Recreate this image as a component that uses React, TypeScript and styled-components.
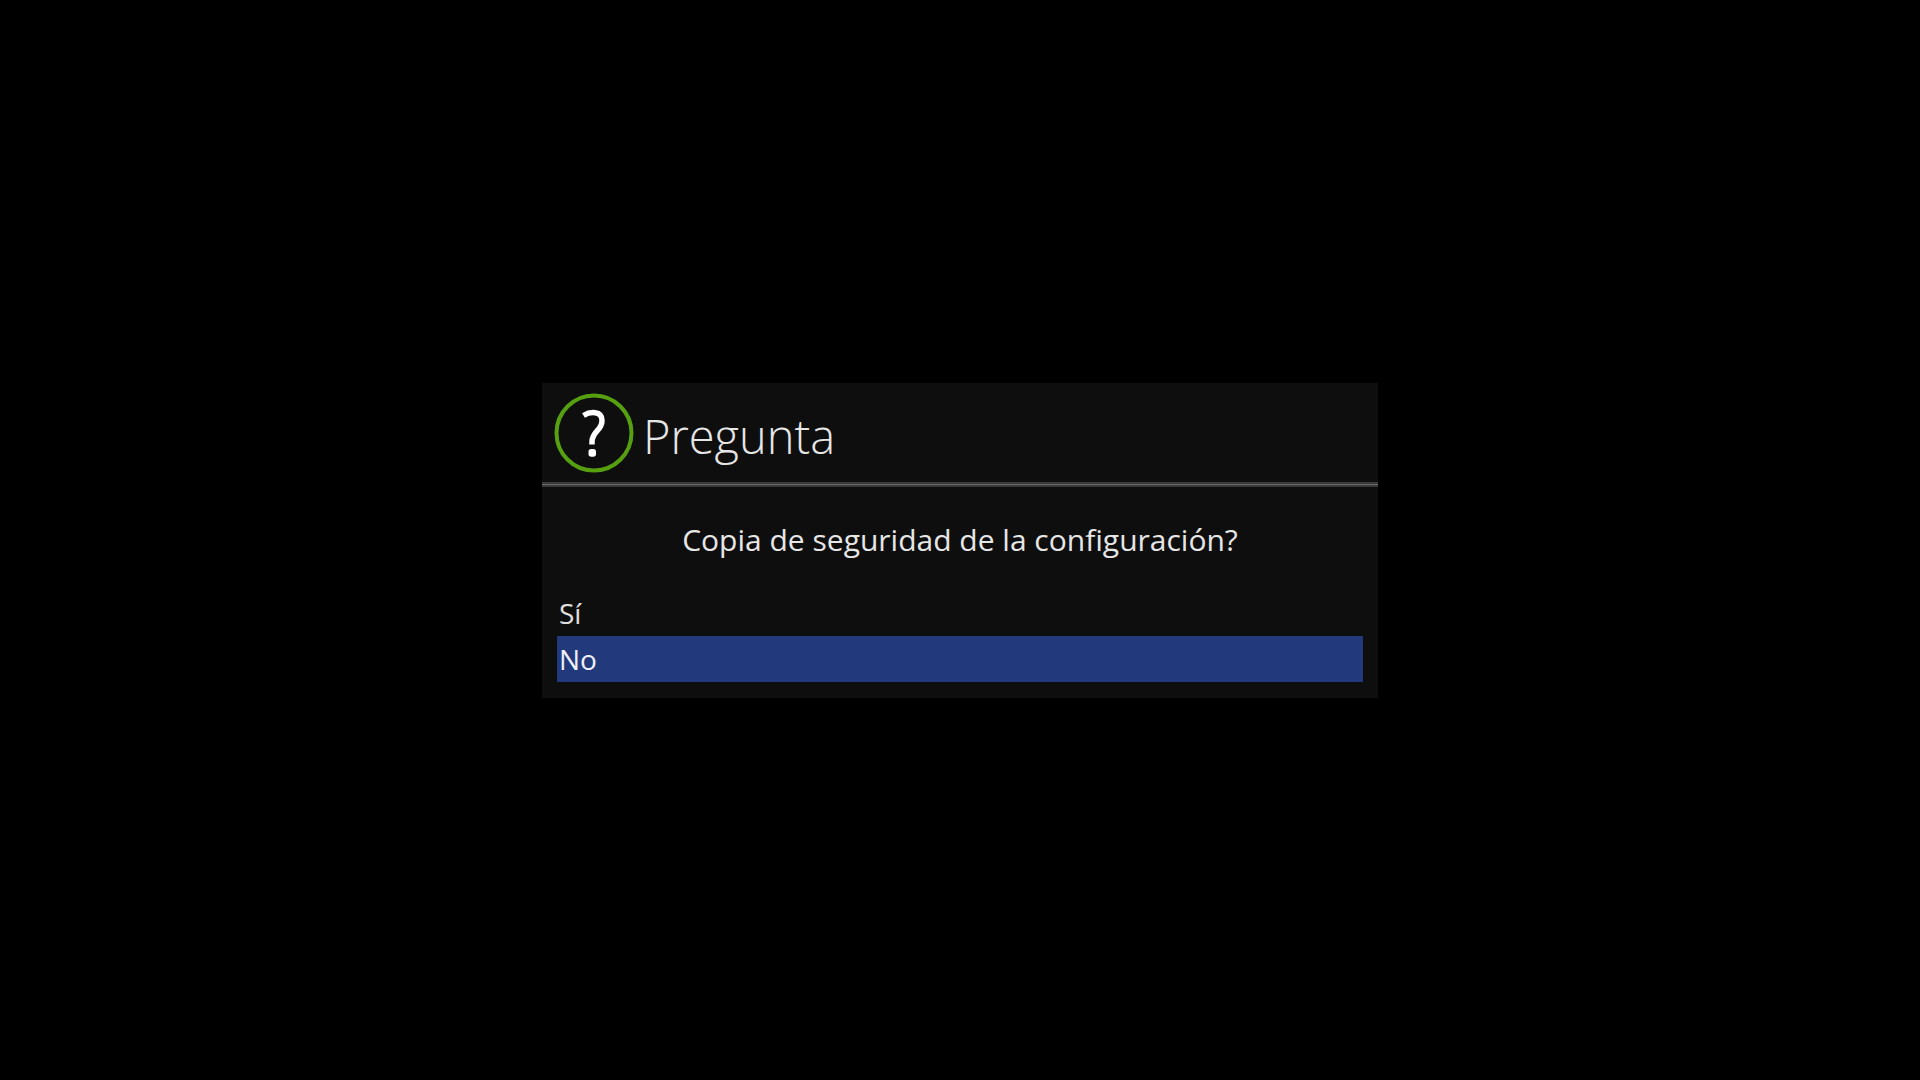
import React, { useState } from "react";
import styled, { createGlobalStyle } from "styled-components";

const GlobalStyle = createGlobalStyle`
  *, *::before, *::after { box-sizing: border-box; }
  body {
    margin: 0;
    background: #000;
    color: #e6e6e6;
    font-family: "Open Sans", "Noto Sans", sans-serif;
  }
`;

const Screen = styled.main`
  min-height: 100vh;
  display: flex;
  align-items: center;
  justify-content: center;
`;

const Dialog = styled.section`
  width: 836px;
  max-width: 100%;
  background: #0e0e0e;
`;

const Header = styled.header`
  display: flex;
  align-items: center;
  gap: 9px;
  padding: 10px 12px 9px;
`;

const QuestionIcon = styled.svg`
  width: 80px;
  height: 80px;
  flex: none;
`;

const Title = styled.h1`
  margin: 0;
  padding-top: 6px;
  font-size: 47px;
  line-height: 68px;
  font-weight: 300;
`;

const Divider = styled.div`
  height: 5px;
  background: #686868;
  border: solid #3a3a3a;
  border-width: 2px 0;
`;

const Message = styled.p`
  margin: 0;
  padding: 32px 15px 29px;
  font-size: 30px;
  line-height: 42px;
  text-align: center;
`;

const Choices = styled.div`
  display: flex;
  flex-direction: column;
  padding: 0 15px 16px;
`;

const Choice = styled.button<{ $selected: boolean }>`
  height: 46px;
  padding: 0 2px;
  border: 0;
  outline: 0;
  background: ${(p) => (p.$selected ? "#223a7c" : "transparent")};
  color: ${(p) => (p.$selected ? "#f0f0f8" : "#e0e0e0")};
  font: 400 28px/46px "Open Sans", "Noto Sans", sans-serif;
  text-align: left;
`;

const options = ["Sí", "No"];

export default function App() {
  const [selected, setSelected] = useState("No");
  return (
    <>
      <GlobalStyle />
      <Screen>
        <Dialog role="dialog" aria-labelledby="dialog-title" aria-describedby="dialog-message">
          <Header>
            <QuestionIcon viewBox="0 0 80 80" fill="none" aria-hidden="true">
              <circle cx="40" cy="40" r="37.5" stroke="#56a010" strokeWidth="4" />
              <path
                d="M29.500 22.500C36 18.500 48 17.500 48 27.500C48 38 38 38 38 49V51.500"
                stroke="#fff"
                strokeWidth="5.500"
              />
              <rect x="34.500" y="56" width="7.500" height="7.800" rx="2.800" fill="#fff" />
            </QuestionIcon>
            <Title id="dialog-title">Pregunta</Title>
          </Header>
          <Divider />
          <Message id="dialog-message">Copia de seguridad de la configuración?</Message>
          <Choices>
            {options.map((option) => (
              <Choice
                key={option}
                type="button"
                $selected={selected === option}
                aria-pressed={selected === option}
                onClick={() => setSelected(option)}
              >
                {option}
              </Choice>
            ))}
          </Choices>
        </Dialog>
      </Screen>
    </>
  );
}
